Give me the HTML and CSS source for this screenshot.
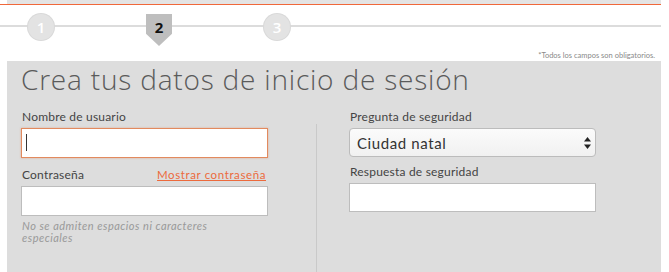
FILE: index.html
```html
<!DOCTYPE html>
<html lang="es">
<head>
    <meta charset="UTF-8">
    <meta name="viewport" content="width=device-width, initial-scale=1.0">
    <title>Crea tus datos de inicio de sesión</title>
    <link rel="stylesheet" href="styles.css">
</head>
<body>
    <div class="topbar"></div>
    <div class="accent"></div>

    <div class="stepper">
        <div class="step done">1</div>
        <div class="step current">2</div>
        <div class="step">3</div>
    </div>

    <p class="note">*Todos los campos son obligatorios.</p>

    <div class="panel">
        <h1>Crea tus datos de inicio de sesión</h1>
        <form class="form">
            <div class="column left">
                <div class="field">
                    <label for="username">Nombre de usuario</label>
                    <div class="focus-wrap">
                        <input type="text" id="username" class="text-input focused">
                        <span class="caret"></span>
                    </div>
                </div>
                <div class="field">
                    <div class="label-row">
                        <label for="password">Contraseña</label>
                        <a href="#" class="show-link">Mostrar contraseña</a>
                    </div>
                    <input type="password" id="password" class="text-input">
                    <p class="hint">No se admiten espacios ni caracteres especiales</p>
                </div>
            </div>

            <div class="divider"></div>

            <div class="column right">
                <div class="field">
                    <label for="question">Pregunta de seguridad</label>
                    <div class="select-wrap">
                        <select id="question" class="select">
                            <option>Ciudad natal</option>
                            <option>Nombre de tu mascota</option>
                            <option>Colegio</option>
                        </select>
                        <svg class="select-arrows" width="7" height="12" viewBox="0 0 7 12">
                            <polygon points="3.5,0 7,4.5 0,4.5" fill="#222"/>
                            <polygon points="0,7.5 7,7.5 3.5,12" fill="#222"/>
                        </svg>
                    </div>
                </div>
                <div class="field">
                    <label for="answer">Respuesta de seguridad</label>
                    <input type="text" id="answer" class="text-input short">
                </div>
            </div>
        </form>
    </div>
</body>
</html>
```

FILE: styles.css
```css
body {
    margin: 0;
    font-family: Lato, "Open Sans", sans-serif;
    color: #444;
    background: #fff;
    width: 669px;
    height: 272px;
    overflow: hidden;
}
.topbar {
    margin-left: 7px;
    width: 654px;
    height: 4px;
    background: #e4e4e4;
}
.accent {
    width: 661px;
    height: 1px;
    background: #f0683a;
}
.stepper {
    position: relative;
    display: flex;
    align-items: flex-start;
    gap: 92px;
    height: 45px;
    padding-left: 28px;
    box-sizing: border-box;
    padding-top: 9px;
}
.stepper::before {
    content: "";
    position: absolute;
    left: 0;
    top: 20px;
    width: 661px;
    height: 2px;
    background: #dcdcdc;
}
.step {
    position: relative;
    width: 26px;
    height: 26px;
    border-radius: 50%;
    background: #e3e3e3;
    box-shadow: 0 0 0 1px #d9d9d9;
    color: #fff;
    font-family: "Open Sans", sans-serif;
    font-size: 15px;
    font-weight: 600;
    line-height: 26px;
    text-align: center;
}
.step.current {
    width: 26px;
    height: 32px;
    border-radius: 0;
    box-shadow: none;
    background: #bebebe;
    color: #111;
    font-weight: 700;
    line-height: 27px;
    clip-path: polygon(0 0, 100% 0, 100% 62%, 50% 100%, 0 62%);
}
.note {
    margin: 0;
    height: 11px;
    padding-right: 14px;
    text-align: right;
    font-size: 7.5px;
    line-height: 11px;
    color: #8a8a8a;
}
.panel {
    margin-left: 7px;
    width: 654px;
    min-height: 211px;
    box-sizing: border-box;
    padding: 2px 14px 0;
    background: #dddddd;
    display: flex;
    flex-direction: column;
}
h1 {
    margin: 0;
    font-family: "Open Sans", sans-serif;
    font-size: 28px;
    font-weight: 300;
    line-height: 32px;
    color: #5a5a5a;
    letter-spacing: 0.8px;
}
.form {
    flex: 1;
    display: flex;
    margin-top: 15px;
}
.column {
    width: 247px;
    display: flex;
    flex-direction: column;
}
.left {
    gap: 10px;
}
.right {
    gap: 8px;
}
.field {
    display: flex;
    flex-direction: column;
}
label {
    font-size: 12px;
    line-height: 14px;
    margin-bottom: 4px;
    padding-left: 1px;
    color: #444;
    letter-spacing: 0.2px;
}
.label-row {
    display: flex;
    justify-content: space-between;
    align-items: baseline;
}
.show-link {
    font-size: 11.5px;
    line-height: 14px;
    color: #ec6a3c;
    text-decoration: underline;
    letter-spacing: 0.6px;
    padding-right: 2px;
}
.text-input {
    box-sizing: border-box;
    width: 247px;
    height: 30px;
    margin: 0;
    border: 1px solid #bdbdbd;
    background: #fff;
    font-family: inherit;
    font-size: 14px;
    outline: none;
}
.text-input.short {
    height: 29px;
}
.text-input.focused {
    border-color: #e28a5e;
    box-shadow: 0 0 2px rgba(230, 120, 70, 0.45);
}
.focus-wrap {
    position: relative;
}
.caret {
    position: absolute;
    left: 5px;
    top: 6px;
    width: 1px;
    height: 17px;
    background: #333;
}
.hint {
    margin: 4px 0 0;
    padding-left: 1px;
    font-size: 11px;
    font-style: italic;
    line-height: 12px;
    color: #999;
    letter-spacing: 0.5px;
    width: 215px;
}
.divider {
    width: 1px;
    margin: 14px 32px 0 48px;
    background: #c9c9c9;
}
.select-wrap {
    position: relative;
}
.select {
    -webkit-appearance: none;
    appearance: none;
    box-sizing: border-box;
    width: 247px;
    height: 29px;
    margin: 0;
    padding: 0 24px 0 7px;
    border: 1px solid #bcbcbc;
    border-radius: 4px;
    background: linear-gradient(#fbfbfb, #f1f1f1);
    font-family: inherit;
    font-size: 15px;
    letter-spacing: 0.6px;
    color: #333;
    outline: none;
}
.select-arrows {
    position: absolute;
    right: 5px;
    top: 9px;
    pointer-events: none;
}
```
